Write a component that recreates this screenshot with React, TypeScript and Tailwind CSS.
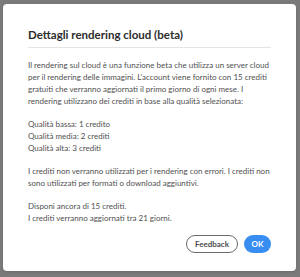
export default function App() {
    return (
        <div className="w-[300px] h-[277px] bg-[#7a7a7a] pt-[4px] pl-[3px] overflow-hidden" style={{ fontFamily: 'Lato, "Open Sans", sans-serif' }}>
            <div className="w-[293px] h-[267px] bg-white rounded-[4px] shadow-sm pt-[24px] pl-[25px] pr-[25px] flex flex-col">
                <h2 className="text-[11.5px] leading-[14px] font-bold text-[#2c2c2c]">Dettagli rendering cloud (beta)</h2>
                <div className="h-px bg-[#e4e4e4] mt-[5px]" />

                <div className="mt-[11px] flex flex-col gap-[11px] text-[8px] leading-[12px] text-[#505050]">
                    <p>
                        Il rendering sul cloud è una funzione beta che utilizza un server cloud per il rendering delle immagini. L'account viene fornito con 15 crediti gratuiti che verranno aggiornati il primo giorno di ogni mese. I rendering utilizzano dei crediti in base alla qualità selezionata:
                    </p>
                    <p>
                        Qualità bassa: 1 credito
                        <br />
                        Qualità media: 2 crediti
                        <br />
                        Qualità alta: 3 crediti
                    </p>
                    <p>I crediti non verranno utilizzati per i rendering con errori. I crediti non sono utilizzati per formati o download aggiuntivi.</p>
                    <p>
                        Disponi ancora di 15 crediti.
                        <br />
                        I crediti verranno aggiornati tra 21 giorni.
                    </p>
                </div>

                <div className="mt-[11px] flex justify-end gap-[6px]">
                    <button className="h-[18px] px-[8px] rounded-full border-[1.5px] border-[#6b6b6b] text-[8px] font-bold text-[#4b4b4b]">Feedback</button>
                    <button className="h-[18px] w-[27px] rounded-full bg-[#378ef0] text-[8px] font-bold text-white">OK</button>
                </div>
            </div>
        </div>
    );
}
